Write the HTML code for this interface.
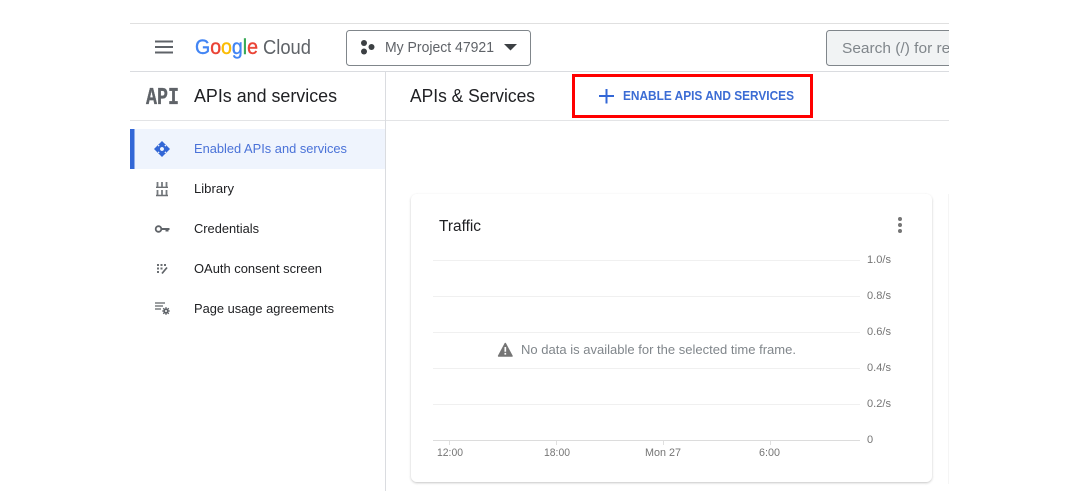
<!DOCTYPE html>
<html lang="en">
<head>
<meta charset="utf-8">
<title>APIs &amp; Services</title>
<style>
html,body{margin:0;padding:0;background:#fff;width:1080px;height:500px;overflow:hidden}
svg{display:block}
text{font-family:"Liberation Sans",sans-serif}
</style>
</head>
<body>
<svg width="1080" height="500" viewBox="0 0 1080 500" xmlns="http://www.w3.org/2000/svg">
<defs>
<clipPath id="c"><rect x="130" y="0" width="819" height="500"/></clipPath>
<filter id="s" x="-5%" y="-5%" width="110%" height="110%"><feDropShadow dx="0" dy="1" stdDeviation="1" flood-color="#3c4043" flood-opacity=".3"/></filter>
</defs>
<g clip-path="url(#c)">
<!-- structure lines -->
<rect x="130" y="23" width="819" height="1" fill="#e0e0e0"/>
<rect x="130" y="71" width="819" height="1" fill="#dadce0"/>
<rect x="130" y="120" width="819" height="1" fill="#e3e4e6"/>
<rect x="385" y="72" width="1" height="419" fill="#dadce0"/>

<!-- header -->
<path d="M155 41.500h18M155 47h18M155 52.500h18" stroke="#5f6368" stroke-width="2" fill="none"/>
<text x="195" y="54" font-size="21" stroke-width=".4" textLength="63" lengthAdjust="spacingAndGlyphs"><tspan fill="#4285f4" stroke="#4285f4">G</tspan><tspan fill="#ea4335" stroke="#ea4335">o</tspan><tspan fill="#fbbc04" stroke="#fbbc04">o</tspan><tspan fill="#4285f4" stroke="#4285f4">g</tspan><tspan fill="#34a853" stroke="#34a853">l</tspan><tspan fill="#ea4335" stroke="#ea4335">e</tspan></text>
<text x="263" y="54" font-size="20" fill="#5f6368" textLength="48" lengthAdjust="spacingAndGlyphs">Cloud</text>

<rect x="346.500" y="30.500" width="184" height="35" rx="3" fill="#fff" stroke="#80868b"/>
<circle cx="364" cy="43" r="3" fill="#3c4043"/><circle cx="371.500" cy="47" r="3" fill="#3c4043"/><circle cx="364" cy="51.500" r="3" fill="#3c4043"/>
<text x="385" y="52" font-size="14.500" fill="#5f6368" textLength="109" lengthAdjust="spacingAndGlyphs">My Project 47921</text>
<path d="M504 44h13l-6.500 6.500z" fill="#3c4043"/>

<rect x="826.500" y="30.500" width="140" height="35" rx="3" fill="#f1f3f4" stroke="#80868b"/>
<text x="842" y="53" font-size="15" fill="#80868b" textLength="116" lengthAdjust="spacingAndGlyphs">Search (/) for res</text>

<!-- sidebar header -->
<text x="146" y="104" font-size="24" font-weight="bold" fill="#5f6368" stroke="#5f6368" stroke-width=".3" textLength="33" lengthAdjust="spacingAndGlyphs" style="font-family:'Liberation Mono',monospace">API</text>
<text x="194" y="102" font-size="18" fill="#202124" textLength="143" lengthAdjust="spacingAndGlyphs">APIs and services</text>
<text x="410" y="102" font-size="18" fill="#202124" textLength="125" lengthAdjust="spacingAndGlyphs">APIs &amp; Services</text>

<!-- enable button -->
<rect x="573.500" y="75.500" width="238" height="41" fill="none" stroke="#f00" stroke-width="3"/>
<path d="M606.500 89v14.500M599 96h15" stroke="#3367d6" stroke-width="2" fill="none"/>
<text x="623" y="100" font-size="12.500" font-weight="bold" fill="#3b6cd4" textLength="171" lengthAdjust="spacingAndGlyphs">ENABLE APIS AND SERVICES</text>

<!-- sidebar -->
<rect x="130" y="129" width="255" height="40" fill="#eff4fd"/>
<rect x="130" y="129" width="4.500" height="40" fill="#3367d6"/>

<g fill="#3367d6">
<path d="M162 141l4 4h-8zM162 157l4-4h-8zM154 149l4-4v8zM170 149l-4-4v8z"/>
<path fill-rule="evenodd" d="M162 144.500a4.500 4.500 0 1 0 .01 0zM162 147a2 2 0 1 1-.01 0z"/>
</g>
<text x="194" y="153" font-size="13" fill="#4a72d8" textLength="153" lengthAdjust="spacingAndGlyphs">Enabled APIs and services</text>

<path d="M156 195.500h12M156 187.300h12" stroke="#6b6f73" stroke-width="1.400" fill="none"/>
<path d="M157.500 182v5M162 182v5M166.500 182v5M157.500 190v5M162 190v5M166.500 190v5" stroke="#777b7f" stroke-width="1.800" fill="none"/>
<text x="194" y="193" font-size="13" fill="#202124" textLength="40" lengthAdjust="spacingAndGlyphs">Library</text>

<circle cx="158.500" cy="229" r="2.800" fill="none" stroke="#5f6368" stroke-width="1.800"/>
<path d="M161 228h8.500v2h-1v1.500h-3V230H161z" fill="#5f6368"/>
<text x="194" y="233" font-size="13" fill="#202124" textLength="65" lengthAdjust="spacingAndGlyphs">Credentials</text>

<g fill="#6b6f73">
<rect x="157" y="264" width="2" height="2"/><rect x="160.500" y="264" width="2" height="2"/><rect x="164" y="264" width="2" height="2"/><rect x="157" y="267.500" width="2" height="2"/><rect x="160.500" y="267.500" width="2" height="2"/><rect x="157" y="271" width="2" height="2"/>
</g>
<path d="M162 273.500l5-6" stroke="#5f6368" stroke-width="1.700" fill="none"/>
<text x="194" y="273" font-size="13" fill="#202124" textLength="128" lengthAdjust="spacingAndGlyphs">OAuth consent screen</text>

<path d="M155 303h10M155 306h8M155 309h6" stroke="#5f6368" stroke-width="1.300" fill="none"/>
<circle cx="166" cy="311" r="2.800" fill="#5f6368"/>
<path d="M166 307v8M162 311h8M163.200 308.200l5.600 5.600M168.800 308.200l-5.600 5.600" stroke="#5f6368" stroke-width="1.100"/>
<circle cx="166" cy="311" r="1" fill="#fff"/>
<text x="194" y="313" font-size="13" fill="#202124" textLength="140" lengthAdjust="spacingAndGlyphs">Page usage agreements</text>

<!-- neighbouring card edge -->
<rect x="948" y="194" width="1" height="290" fill="#f5f5f5"/>

<!-- card -->
<rect x="411" y="194" width="521" height="288" rx="6" fill="#fff" filter="url(#s)"/>
<text x="439" y="231" font-size="15.500" fill="#202124" textLength="42" lengthAdjust="spacingAndGlyphs">Traffic</text>
<circle cx="900" cy="219" r="2" fill="#757575"/><circle cx="900" cy="225" r="2" fill="#757575"/><circle cx="900" cy="231" r="2" fill="#757575"/>

<g fill="#f0f0f0">
<rect x="433" y="260" width="427" height="1"/>
<rect x="433" y="296" width="427" height="1"/>
<rect x="433" y="332" width="427" height="1"/>
<rect x="433" y="368" width="427" height="1"/>
<rect x="433" y="404" width="427" height="1"/>
</g>
<rect x="433" y="440" width="427" height="1" fill="#dcdcdc"/>
<g fill="#e0e0e0">
<rect x="449" y="441" width="1" height="4"/><rect x="556" y="441" width="1" height="4"/><rect x="663" y="441" width="1" height="4"/><rect x="770" y="441" width="1" height="4"/>
</g>

<g font-size="11" fill="#757575">
<text x="867" y="263" textLength="24" lengthAdjust="spacingAndGlyphs">1.0/s</text>
<text x="867" y="299" textLength="24" lengthAdjust="spacingAndGlyphs">0.8/s</text>
<text x="867" y="335" textLength="24" lengthAdjust="spacingAndGlyphs">0.6/s</text>
<text x="867" y="371" textLength="24" lengthAdjust="spacingAndGlyphs">0.4/s</text>
<text x="867" y="407" textLength="24" lengthAdjust="spacingAndGlyphs">0.2/s</text>
<text x="867" y="443">0</text>
<text x="437" y="456" textLength="26" lengthAdjust="spacingAndGlyphs">12:00</text>
<text x="544" y="456" textLength="26" lengthAdjust="spacingAndGlyphs">18:00</text>
<text x="645" y="456" textLength="36" lengthAdjust="spacingAndGlyphs">Mon 27</text>
<text x="759" y="456" textLength="21" lengthAdjust="spacingAndGlyphs">6:00</text>
</g>

<path d="M505.300 343.500l6.700 12.500h-13.400z" fill="#757575" stroke="#757575" stroke-width="1.500" stroke-linejoin="round"/>
<path d="M505.300 347v4.800M505.300 352.900v1.700" stroke="#fff" stroke-width="1.700"/>
<text x="521" y="354" font-size="13" fill="#80868b" textLength="275" lengthAdjust="spacingAndGlyphs">No data is available for the selected time frame.</text>
</g>
</svg>
</body>
</html>
